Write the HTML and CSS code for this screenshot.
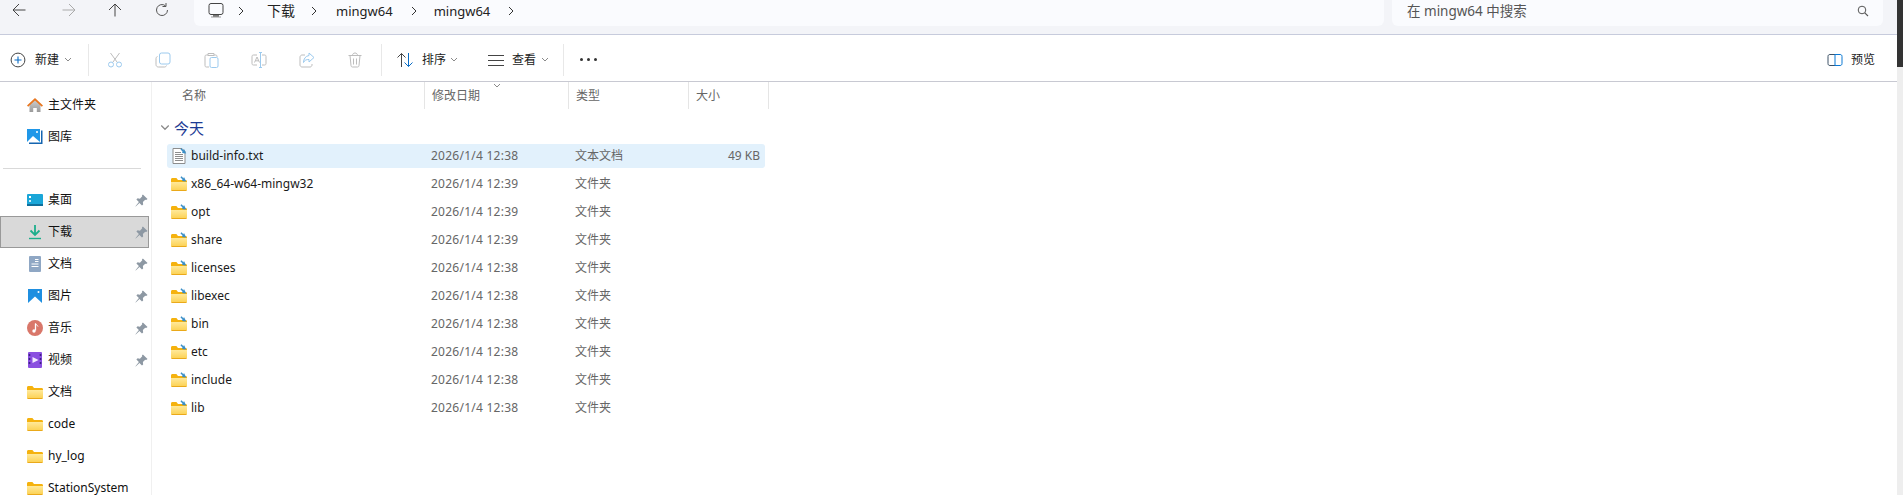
FILE: index.html
```html
<!DOCTYPE html>
<html lang="zh-CN">
<head>
<meta charset="utf-8">
<title>mingw64</title>
<link rel="stylesheet" href="styles.css">
</head>
<body>
<svg class="defs" width="0" height="0" aria-hidden="true">
  <defs>
    <linearGradient id="fg" x1="0" y1="0" x2="0" y2="1"><stop offset="0" stop-color="#ffe99a"/><stop offset="1" stop-color="#fcd04f"/></linearGradient>
    <linearGradient id="hg" x1="0" y1="0" x2="0" y2="1"><stop offset="0" stop-color="#d2d2d2"/><stop offset="1" stop-color="#9a9a9a"/></linearGradient>
    <symbol id="chev-r" viewBox="0 0 8 12"><path d="M2 2l4 4-4 4" fill="none" stroke="#333" stroke-width="1"/></symbol>
    <symbol id="chev-d" viewBox="0 0 8 6"><path d="M1 1l3 3 3-3" fill="none" stroke="#8a8a8a" stroke-width="1"/></symbol>
    <symbol id="folder" viewBox="0 0 16 16">
      <path d="M0 3.500C0 2.700.6 2 1.400 2h4l1.600 2h7.600c.8 0 1.400.6 1.400 1.400V8H0z" fill="#f5b20e"/>
      <path d="M0 6h16v7.600c0 .8-.6 1.400-1.400 1.400H1.400C.6 15 0 14.400 0 13.600z" fill="url(#fg)"/>
      <path d="M0 14h16v-.4c0 .8-.6 1.400-1.400 1.400H1.400C.6 15 0 14.400 0 13.600z" fill="#eaa91a"/>
    </symbol>
    <symbol id="link" viewBox="0 0 16 16"><path d="M10 .8l3.600 4" stroke="#3a8fc8" stroke-width="1.500" fill="none"/><path d="M13 1l2.200 4.600L11 5" fill="#3a8fc8"/></symbol>
    <symbol id="pin" viewBox="0 0 14 14"><path d="M8.500 .5l5 5-1.500 1-1-.3-2.500 2.500.3 2.500-1.300 1.300-2.700-2.700L.8 13.500l-.3-.3 3.700-4.500L1.500 6 2.800 4.700l2.500.3L7.800 2.500 7.500 1.500z" fill="#8d98a3"/></symbol>
  </defs>
</svg>

<div class="scrollbar"><div class="scrollbar-thumb"></div></div>

<header class="topbar">
  <nav class="nav">
    <svg class="nav-icon" viewBox="0 0 16 16"><path d="M14.500 8H2M8 2L2 8l6 6" fill="none" stroke="#444" stroke-width="1"/></svg>
    <svg class="nav-icon" viewBox="0 0 16 16"><path d="M1.500 8H14M8 2l6 6-6 6" fill="none" stroke="#aaa" stroke-width="1"/></svg>
    <svg class="nav-icon" viewBox="0 0 16 16"><path d="M8 14.500V2M2 8l6-6 6 6" fill="none" stroke="#444" stroke-width="1"/></svg>
    <svg class="nav-icon" viewBox="0 0 16 16"><path d="M13.500 8A5.500 5.500 0 1 1 11.500 3.800" fill="none" stroke="#555" stroke-width="1"/><path d="M12 1v3.500H8.500" fill="none" stroke="#555" stroke-width="1"/></svg>
  </nav>
  <div class="address">
    <svg class="monitor" viewBox="0 0 16 16"><rect x="1" y=".5" width="14" height="11" rx="2" fill="none" stroke="#444" stroke-width="1"/><rect x="5" y="12" width="6" height="2" fill="#777"/><rect x="3" y="13.500" width="10" height="1" fill="#999"/></svg>
    <svg class="crumb-chev first" viewBox="0 0 8 12"><use href="#chev-r"/></svg>
    <span class="crumb crumb-dl">下载</span>
    <svg class="crumb-chev second" viewBox="0 0 8 12"><use href="#chev-r"/></svg>
    <span class="crumb">mingw64</span>
    <svg class="crumb-chev" viewBox="0 0 8 12"><use href="#chev-r"/></svg>
    <span class="crumb">mingw64</span>
    <svg class="crumb-chev" viewBox="0 0 8 12"><use href="#chev-r"/></svg>
  </div>
  <div class="search">
    <span class="search-text">在 mingw64 中搜索</span>
    <svg class="search-icon" viewBox="0 0 12 12"><circle cx="5" cy="5" r="3.800" fill="none" stroke="#555" stroke-width="1"/><path d="M7.800 7.800L11 11" stroke="#555" stroke-width="1.100"/></svg>
  </div>
</header>

<section class="toolbar">
  <div class="tool-new">
    <svg class="icon16" viewBox="0 0 16 16"><circle cx="8" cy="8" r="6.900" fill="none" stroke="#444" stroke-width="1"/><path d="M8 4.500v7M4.500 8h7" stroke="#0a6cc4" stroke-width="1.100"/></svg>
    <span class="tool-label">新建</span>
    <svg class="tool-chev" viewBox="0 0 8 6"><use href="#chev-d"/></svg>
  </div>
  <i class="tool-sep"></i>
  <div class="tool-group">
    <span class="tool-btn"><svg class="icon16" viewBox="0 0 16 16"><path d="M3.500 1l6.500 9M12.500 1L6 10" stroke="#bdbdbd" fill="none"/><circle cx="4" cy="12.500" r="2.500" fill="none" stroke="#9ccaee"/><circle cx="12" cy="12.500" r="2.500" fill="none" stroke="#9ccaee"/></svg></span>
    <span class="tool-btn"><svg class="icon16" viewBox="0 0 16 16"><path d="M2.500 4.500C1.500 5 1 5.500 1 6.500v6C1 14 2 15 3.500 15h6c1 0 1.500-.5 2-1.500" fill="none" stroke="#bdbdbd"/><rect x="4.500" y="1" width="10.500" height="11" rx="2" fill="none" stroke="#9ccaee"/></svg></span>
    <span class="tool-btn"><svg class="icon16" viewBox="0 0 16 16"><path d="M5 3H3.500C2.500 3 2 3.500 2 4.500v9C2 14.500 2.500 15 3.500 15H6M11 3h1.500c1 0 1.500.5 1.500 1.500V5M5 3.500V1.500h6v2z" fill="none" stroke="#bdbdbd"/><rect x="7" y="5.500" width="8" height="10" rx="1.500" fill="none" stroke="#9ccaee"/></svg></span>
    <span class="tool-btn"><svg class="icon16" viewBox="0 0 16 16"><path d="M6 3H2.500C1.500 3 1 3.500 1 4.500v7C1 12.500 1.500 13 2.500 13H6M11 3h2.500c1 0 1.500.5 1.500 1.500v7c0 1-.5 1.500-1.500 1.500H11" fill="none" stroke="#bdbdbd"/><path d="M3.500 10.500L6 5l2.500 5.500M4.500 8.800h3" fill="none" stroke="#bdbdbd"/><path d="M8 .5h3M8 15.500h3M9.500 .5v15" fill="none" stroke="#9ccaee"/></svg></span>
    <span class="tool-btn"><svg class="icon16" viewBox="0 0 16 16"><path d="M6 3H3C2 3 1 4 1 5v8c0 1 1 2 2 2h8c1 0 2-1 2-2v-1" fill="none" stroke="#bdbdbd"/><path d="M10 1l5 4.500L10 10V7.500C7.500 7.500 5.500 8 4.500 10.500 4.500 7 6.500 4 10 3.500z" fill="none" stroke="#9ccaee"/></svg></span>
    <span class="tool-btn"><svg class="icon16" viewBox="0 0 16 16"><path d="M1.500 3.500h13M5.500 3.500c0-1.500 1-2.500 2.500-2.500s2.500 1 2.500 2.500M3 3.500l1 10c.1 1 .7 1.500 1.500 1.500h5c.8 0 1.400-.5 1.500-1.500l1-10M6.500 6.500v6M9.500 6.500v6" fill="none" stroke="#bdbdbd"/></svg></span>
  </div>
  <i class="tool-sep"></i>
  <div class="tool-sort">
    <svg class="icon16" viewBox="0 0 16 16"><path d="M4.500 15V1.500M.5 5.500l4-4 4 4" fill="none" stroke="#444"/><path d="M11.500 1v13.500M7.500 10.500l4 4 4-4" fill="none" stroke="#0a6cc4"/></svg>
    <span class="tool-label">排序</span>
    <svg class="tool-chev" viewBox="0 0 8 6"><use href="#chev-d"/></svg>
  </div>
  <div class="tool-view">
    <svg class="icon16" viewBox="0 0 16 16"><path d="M0 3.500h16M0 8.500h16M0 13.500h16" stroke="#444"/></svg>
    <span class="tool-label">查看</span>
    <svg class="tool-chev" viewBox="0 0 8 6"><use href="#chev-d"/></svg>
  </div>
  <i class="tool-sep"></i>
  <div class="tool-more"><b></b><b></b><b></b></div>
  <div class="tool-preview">
    <svg class="icon16" viewBox="0 0 16 16"><path d="M8 2.500H3C1.700 2.500 1 3.200 1 4.500v7c0 1.300.7 2 2 2h5" fill="none" stroke="#3c5166"/><path d="M8 2v12M8 2.500h5c1.300 0 2 .7 2 2v7c0 1.300-.7 2-2 2H8" fill="none" stroke="#0a78d4"/></svg>
    <span class="tool-label">预览</span>
  </div>
</section>

<main class="body">
  <aside class="sidebar">
    <ul class="side-list">
      <li class="side-item">
        <svg class="side-icon" viewBox="0 0 16 16"><path d="M2.500 7L8 2l5.500 5v8H9.800v-4H6.200v4H2.500z" fill="url(#hg)"/><path d="M0 8.500L8 1l8 7.500-1.200 1.200L8 3.500 1.200 9.700z" fill="#e8761f"/></svg>
        <span>主文件夹</span>
      </li>
      <li class="side-item">
        <svg class="side-icon" viewBox="0 0 16 16"><rect x="0" y="0" width="13" height="13" fill="#1f97e8"/><path d="M0 13l6-6 7 6z" fill="#fff"/><circle cx="10" cy="3" r="1" fill="#fff"/><path d="M14 1.500h1.500V15H2v-1.500h12z" fill="#1565b0"/></svg>
        <span>图库</span>
      </li>
    </ul>
    <hr class="side-divider">
    <ul class="side-list">
      <li class="side-item">
        <svg class="side-icon" viewBox="0 0 16 16"><rect x="0" y="2" width="16" height="12" rx="1" fill="#1aa6d8"/><rect x="0" y="12" width="16" height="2" fill="#0f6f9c"/><rect x="2" y="4" width="2" height="2" fill="#fff"/><rect x="2" y="8" width="2" height="2" fill="#cfeffa"/></svg>
        <span>桌面</span><svg class="pin" viewBox="0 0 14 14"><use href="#pin"/></svg>
      </li>
      <li class="side-item is-current">
        <svg class="side-icon" viewBox="0 0 16 16"><path d="M8 1v9M3.500 6.500L8 11l4.500-4.500" fill="none" stroke="#1cae8c" stroke-width="1.800"/><path d="M2 14.500h12" stroke="#1cae8c" stroke-width="1.400"/></svg>
        <span>下载</span><svg class="pin" viewBox="0 0 14 14"><use href="#pin"/></svg>
      </li>
      <li class="side-item">
        <svg class="side-icon" viewBox="0 0 16 16"><rect x="2" y="0" width="12" height="16" rx="1" fill="#8fa7c4"/><path d="M8 3.500h3.500M8 5.500h3.500M4.500 8h7M4.500 10.500h7" stroke="#fff"/></svg>
        <span>文档</span><svg class="pin" viewBox="0 0 14 14"><use href="#pin"/></svg>
      </li>
      <li class="side-item">
        <svg class="side-icon" viewBox="0 0 16 16"><rect x="1" y="1" width="14" height="14" fill="#1f8fe0"/><path d="M1 15l7-6.500L15 15z" fill="#fff"/><circle cx="11.500" cy="4" r="1" fill="#fff"/></svg>
        <span>图片</span><svg class="pin" viewBox="0 0 14 14"><use href="#pin"/></svg>
      </li>
      <li class="side-item">
        <svg class="side-icon" viewBox="0 0 16 16"><circle cx="8" cy="8" r="8" fill="#d9776a"/><path d="M8.500 3.500v7" stroke="#fff" stroke-width="1.300"/><circle cx="7" cy="11" r="1.700" fill="#fff"/><path d="M8.500 3.500c.5 1.500 2 1.500 2.500 3" stroke="#fff" fill="none"/></svg>
        <span>音乐</span><svg class="pin" viewBox="0 0 14 14"><use href="#pin"/></svg>
      </li>
      <li class="side-item">
        <svg class="side-icon" viewBox="0 0 16 16"><rect x="1" y="0" width="14" height="16" rx="1" fill="#8a4fe0"/><path d="M5.500 5l6 3-6 3z" fill="#f3ecff"/><path d="M2.500 2v12M13.500 2v12" stroke="#3d1f86" stroke-width="1.600" stroke-dasharray="2 2"/></svg>
        <span>视频</span><svg class="pin" viewBox="0 0 14 14"><use href="#pin"/></svg>
      </li>
      <li class="side-item"><svg class="side-icon" viewBox="0 0 16 16"><use href="#folder"/></svg><span>文档</span></li>
      <li class="side-item"><svg class="side-icon" viewBox="0 0 16 16"><use href="#folder"/></svg><span>code</span></li>
      <li class="side-item"><svg class="side-icon" viewBox="0 0 16 16"><use href="#folder"/></svg><span>hy_log</span></li>
      <li class="side-item"><svg class="side-icon" viewBox="0 0 16 16"><use href="#folder"/></svg><span>StationSystem</span></li>
    </ul>
  </aside>

  <section class="files">
    <div class="file-head">
      <span class="col-name">名称</span>
      <span class="col-date">修改日期<svg class="sort-caret" viewBox="0 0 8 6"><use href="#chev-d"/></svg></span>
      <span class="col-type">类型</span>
      <span class="col-size">大小</span>
    </div>
    <div class="group-title">
      <svg class="group-chev" viewBox="0 0 8 6"><use href="#chev-d"/></svg>
      <span>今天</span>
    </div>
    <div class="rows">
      <div class="row is-selected">
        <svg class="file-icon" viewBox="0 0 16 16"><path d="M2 .5h9l3 3v12H2z" fill="#fff" stroke="#8d8d8d"/><path d="M4 4.500h6M4 6.500h8M4 8.500h8M4 10.500h8M4 12.500h8" stroke="#8d8d8d"/><use href="#link"/></svg>
        <span class="cell-name">build-info.txt</span><span class="cell-date">2026/1/4 12:38</span><span class="cell-type">文本文档</span><span class="cell-size">49 KB</span>
      </div>
      <div class="row"><svg class="file-icon" viewBox="0 0 16 16"><use href="#folder"/><use href="#link"/></svg><span class="cell-name">x86_64-w64-mingw32</span><span class="cell-date">2026/1/4 12:39</span><span class="cell-type">文件夹</span></div>
      <div class="row"><svg class="file-icon" viewBox="0 0 16 16"><use href="#folder"/><use href="#link"/></svg><span class="cell-name">opt</span><span class="cell-date">2026/1/4 12:39</span><span class="cell-type">文件夹</span></div>
      <div class="row"><svg class="file-icon" viewBox="0 0 16 16"><use href="#folder"/><use href="#link"/></svg><span class="cell-name">share</span><span class="cell-date">2026/1/4 12:39</span><span class="cell-type">文件夹</span></div>
      <div class="row"><svg class="file-icon" viewBox="0 0 16 16"><use href="#folder"/><use href="#link"/></svg><span class="cell-name">licenses</span><span class="cell-date">2026/1/4 12:38</span><span class="cell-type">文件夹</span></div>
      <div class="row"><svg class="file-icon" viewBox="0 0 16 16"><use href="#folder"/><use href="#link"/></svg><span class="cell-name">libexec</span><span class="cell-date">2026/1/4 12:38</span><span class="cell-type">文件夹</span></div>
      <div class="row"><svg class="file-icon" viewBox="0 0 16 16"><use href="#folder"/><use href="#link"/></svg><span class="cell-name">bin</span><span class="cell-date">2026/1/4 12:38</span><span class="cell-type">文件夹</span></div>
      <div class="row"><svg class="file-icon" viewBox="0 0 16 16"><use href="#folder"/><use href="#link"/></svg><span class="cell-name">etc</span><span class="cell-date">2026/1/4 12:38</span><span class="cell-type">文件夹</span></div>
      <div class="row"><svg class="file-icon" viewBox="0 0 16 16"><use href="#folder"/><use href="#link"/></svg><span class="cell-name">include</span><span class="cell-date">2026/1/4 12:38</span><span class="cell-type">文件夹</span></div>
      <div class="row"><svg class="file-icon" viewBox="0 0 16 16"><use href="#folder"/><use href="#link"/></svg><span class="cell-name">lib</span><span class="cell-date">2026/1/4 12:38</span><span class="cell-type">文件夹</span></div>
    </div>
  </section>
</main>
</body>
</html>
```

FILE: styles.css
```css
* { box-sizing: border-box; }
html, body { height: 100%; }
body {
  margin: 0;
  overflow: hidden;
  background: #fff;
  color: #1a1a1a;
  font: 12px/16px "Noto Sans", "Noto Sans CJK SC", sans-serif;
}
ul { list-style: none; margin: 0; padding: 0; }
svg { display: block; flex: none; }
.defs { position: absolute; }

.scrollbar {
  position: absolute;
  top: 0; right: 0; bottom: 0;
  width: 6px;
  background: #eeeeee;
}
.scrollbar-thumb { height: 67px; background: #333; }

/* top bar */
.topbar {
  display: flex;
  height: 35px;
  padding-bottom: 9px;
  background: #f3f4f8;
  border-bottom: 1px solid #c7cbdc;
}
.nav {
  display: grid;
  grid-template-columns: 38px 62px 30px 64px;
  justify-items: center;
  align-items: center;
  width: 194px;
}
.nav-icon { width: 16px; height: 16px; margin-top: -5px; }
.address {
  display: flex;
  align-items: center;
  width: 1190px;
  height: 26px;
  padding: 0 0 5px 14px;
  background: #fafbfe;
  border-radius: 0 0 6px 6px;
}
.monitor { width: 16px; height: 16px; }
.crumb { font-size: 13px; color: #222; }
.crumb-dl { font-size: 14px; }
.crumb-chev { width: 8px; height: 12px; margin: 0 16px 0 17px; }
.crumb-chev.first { margin: 0 22px 0 13px; }
.crumb-chev.second { margin: 0 18px 0 15px; }
.search {
  display: flex;
  align-items: center;
  justify-content: space-between;
  width: 491px;
  height: 26px;
  margin-left: 8px;
  padding: 0 14px 5px 15px;
  background: #fafbfe;
  border-radius: 0 0 6px 6px;
}
.search-text { font-size: 13.5px; color: #555; }
.search-icon { width: 12px; height: 12px; }

/* toolbar */
.toolbar {
  display: flex;
  align-items: center;
  height: 47px;
  padding: 3px 28px 0 0;
  border-bottom: 1px solid #c8c9d2;
}
.icon16 { width: 16px; height: 16px; }
.tool-label { color: #222; }
.tool-chev { width: 8px; height: 6px; }
.tool-new, .tool-sort, .tool-view, .tool-preview { display: flex; align-items: center; }
.tool-new { width: 88px; padding-left: 10px; }
.tool-new .tool-label { margin: 0 5px 0 9px; }
.tool-sep { width: 1px; height: 32px; background: #e8e8e8; }
.tool-group { display: flex; margin: 0 2px; }
.tool-btn { display: flex; justify-content: center; width: 48px; }
.tool-sort { width: 103px; padding-left: 15px; }
.tool-sort .tool-label { margin: 0 4px 0 9px; }
.tool-view { width: 78px; padding-left: 3px; }
.tool-view .tool-label { margin: 0 5px 0 8px; }
.tool-more { display: flex; gap: 4px; margin-left: 16px; }
.tool-more b { width: 3px; height: 3px; border-radius: 50%; background: #333; }
.tool-preview { margin-left: auto; }
.tool-preview .tool-label { margin-left: 8px; }

/* main */
.body { display: flex; height: 414px; }
.sidebar {
  width: 152px;
  padding-top: 7px;
  border-right: 1px solid #f0f0f0;
  overflow: hidden;
}
.side-item {
  display: flex;
  align-items: center;
  width: 149px;
  height: 32px;
  padding: 0 0 0 27px;
  color: #111;
}
.side-icon { width: 16px; height: 16px; margin-right: 5px; }
.pin { width: 13px; height: 13px; margin-left: auto; margin-right: 1px; }
.is-current { background: #d9d9d9; border: 1px solid #999; padding-left: 26px; }
.is-current .pin { margin-right: 0; }
.side-divider {
  width: 138px;
  height: 1px;
  margin: 15px 0 15px 3px;
  border: 0;
  background: #d9d9d9;
}

.files { flex: 1; }
.file-head {
  display: grid;
  grid-template-columns: 272px 144px 120px 81px;
  width: 617px;
  height: 27px;
  color: #666;
  align-items: center;
}
.file-head span { height: 100%; display: flex; align-items: center; position: relative; }
.col-name { padding-left: 30px; }
.col-date, .col-type, .col-size { border-left: 1px solid #e5e5e5; padding-left: 7px; }
.col-size { border-right: 1px solid #e5e5e5; }
.sort-caret { position: absolute; left: 68px; top: 1px; width: 8px; height: 6px; }
.group-title {
  display: flex;
  align-items: center;
  height: 30px;
  padding-left: 8px;
  padding-top: 8px;
  font-size: 15px;
  color: #1c3a94;
}
.group-chev { width: 10px; height: 8px; margin-right: 4px; }
.rows { padding-left: 15px; display: flex; flex-direction: column; gap: 4px; margin-top: 5px; }
.row {
  display: flex;
  align-items: center;
  width: 598px;
  height: 24px;
  padding-left: 4px;
  border-radius: 3px;
  color: #666;
}
.is-selected { background: #e2f1fc; }
.file-icon { width: 16px; height: 16px; margin-right: 4px; }
.cell-name { width: 240px; color: #1a1a1a; }
.cell-date { width: 144px; letter-spacing: .25px; }
.cell-type { width: 110px; }
.cell-size { width: 75px; text-align: right; }
```
